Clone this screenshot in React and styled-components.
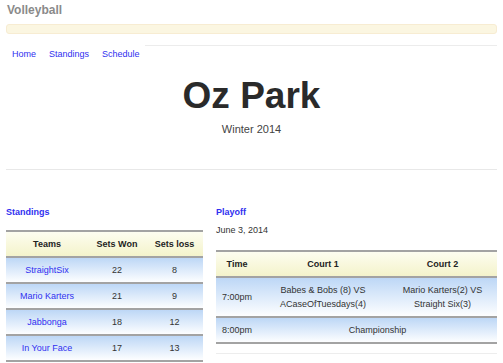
import styled, { createGlobalStyle } from 'styled-components'

const GlobalStyle = createGlobalStyle`
  html, body {
    margin: 0;
    padding: 0;
    overflow: hidden;
    background: #fff;
  }
  body {
    font-family: "Liberation Sans", Arial, sans-serif;
    font-size: 9px;
    color: #333;
  }
`

const Page = styled.div`
  padding: 0 6px;
`

const Brand = styled.div`
  margin-top: 3px;
  font-size: 12px;
  line-height: 14px;
  font-weight: bold;
  color: #8a8a8a;
  padding-left: 1px;
`

const Notice = styled.div`
  margin-top: 7px;
  height: 8px;
  background: #fbf6e1;
  border: 1px solid #f7ecd2;
  border-radius: 3px;
`

const NavRule = styled.div`
  margin: 11px 0 0 139px;
  height: 1px;
  background: #ececec;
`

const Nav = styled.nav`
  display: flex;
  gap: 13px;
  padding-left: 6px;
  margin-top: 2px;
  line-height: 12px;
`

const Link = styled.a`
  color: #3030f0;
  text-decoration: none;
  font-weight: ${p => (p.bold ? 'bold' : 'normal')};
`

const Hero = styled.header`
  text-align: center;
  margin-top: 16px;
`

const Title = styled.h1`
  margin: 0;
  font-size: 37px;
  line-height: 40px;
  font-weight: bold;
  color: #2a2a2a;
`

const Season = styled.div`
  margin-top: 6px;
  font-size: 11px;
  line-height: 14px;
  color: #444;
`

const Rule = styled.div`
  height: 1px;
  background: #e8e8e8;
  margin-top: ${p => p.top}px;
`

const Columns = styled.div`
  display: grid;
  grid-template-columns: 197px 281px;
  column-gap: 13px;
  margin-top: 36px;
`

const Section = styled.section`
  display: flex;
  flex-direction: column;
`

const Heading = styled.div`
  line-height: 12px;
  margin-bottom: ${p => p.gap}px;
`

const DateLine = styled.div`
  line-height: 12px;
  color: #333;
  margin-bottom: 14px;
`

const Table = styled.table`
  width: 100%;
  border-collapse: separate;
  border-spacing: 0;
  table-layout: fixed;
  border-bottom: 2px solid #a3a3a3;
`

const Th = styled.th`
  height: 24px;
  padding: 0;
  border-top: 2px solid #a3a3a3;
  background: linear-gradient(#fdfdf0, #f4f3cb);
  color: #222;
  font-weight: bold;
  text-align: center;
  width: ${p => p.w}px;
`

const Td = styled.td`
  height: 24px;
  padding: ${p => (p.tall ? '5px 0' : '0')};
  border-top: 2px solid #a3a3a3;
  background: linear-gradient(#bdd7f6, #fdfeff);
  text-align: ${p => (p.left ? 'left' : 'center')};
  padding-left: ${p => (p.left ? '6px' : '0')};
  line-height: 14px;
  color: #333;
`

const TeamLink = styled.span`
  color: #3030f0;
`

const FooterRule = styled.div`
  height: 1px;
  background: #ededed;
  margin-top: 9px;
`

const standings = [
  ['StraightSix', 22, 8],
  ['Mario Karters', 21, 9],
  ['Jabbonga', 18, 12],
  ['In Your Face', 17, 13]
]

function App () {
  return (
    <Page>
      <GlobalStyle />
      <Brand>Volleyball</Brand>
      <Notice />
      <NavRule />
      <Nav>
        <Link href='#'>Home</Link>
        <Link href='#'>Standings</Link>
        <Link href='#'>Schedule</Link>
      </Nav>
      <Hero>
        <Title>Oz Park</Title>
        <Season>Winter 2014</Season>
      </Hero>
      <Rule top={33} />
      <Columns>
        <Section>
          <Heading gap={12}><Link href='#' bold>Standings</Link></Heading>
          <Table>
            <thead>
              <tr>
                <Th w={82}>Teams</Th>
                <Th w={58}>Sets Won</Th>
                <Th w={57}>Sets loss</Th>
              </tr>
            </thead>
            <tbody>
              {standings.map(([team, won, lost]) => (
                <tr key={team}>
                  <Td><TeamLink>{team}</TeamLink></Td>
                  <Td>{won}</Td>
                  <Td>{lost}</Td>
                </tr>
              ))}
            </tbody>
          </Table>
        </Section>
        <Section>
          <Heading gap={6}><Link href='#' bold>Playoff</Link></Heading>
          <DateLine>June 3, 2014</DateLine>
          <Table>
            <thead>
              <tr>
                <Th w={42}>Time</Th>
                <Th w={130}>Court 1</Th>
                <Th>Court 2</Th>
              </tr>
            </thead>
            <tbody>
              <tr>
                <Td left tall>7:00pm</Td>
                <Td tall>Babes &amp; Bobs (8) VS<br />ACaseOfTuesdays(4)</Td>
                <Td tall>Mario Karters(2) VS<br />Straight Six(3)</Td>
              </tr>
              <tr>
                <Td left>8:00pm</Td>
                <Td colSpan={2}>Championship</Td>
              </tr>
            </tbody>
          </Table>
          <FooterRule />
        </Section>
      </Columns>
    </Page>
  )
}

export default App
